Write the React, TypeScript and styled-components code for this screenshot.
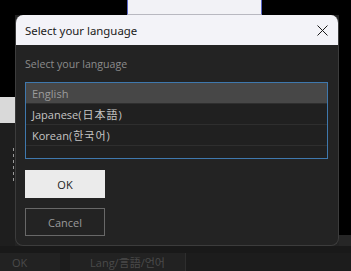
import styled, { createGlobalStyle } from 'styled-components';

const GlobalStyle = createGlobalStyle`
    html, body {
        margin: 0;
        padding: 0;
        background: #000;
    }
    body {
        font-family: "Open Sans", "Noto Sans", "Noto Sans CJK JP", sans-serif;
    }
`;

const StyledScreen = styled.div`
    position: relative;
    width: 351px;
    height: 271px;
    overflow: hidden;

    display: flex;
    flex-direction: column;

    background-color: #000;
`;

const TopStrip = styled.div`
    height: 15px;
    display: flex;

    .window {
        margin-left: 127px;
        width: 133px;
        height: 14px;
        background-color: #f2f2f6;
        border-left: 1px solid #5a66c8;
        border-right: 1px solid #5a66c8;
        border-bottom: 1px solid #b8b8c0;
    }
`;

const Middle = styled.div`
    flex: 1;
    display: flex;

    .left {
        width: 15px;
        display: flex;
        flex-direction: column;
        background-color: #1e1e1e;

        &-top {
            height: 82px;
            background-color: #000;
        }

        &-panel {
            height: 26px;
            background-color: #d9d9d9;
        }

        &-dots {
            margin: 25px 0 0 13px;
            width: 1px;
            height: 34px;
            background-image: linear-gradient(#9a9a9a 50%, transparent 50%);
            background-size: 1px 6px;
        }
    }

    .center {
        flex: 1;
        background-color: #232323;
    }

    .right {
        width: 12px;
        display: flex;
        flex-direction: column;
        background-color: #000;

        &-bottom {
            margin-top: auto;
            height: 11px;
            background-color: #262626;
        }
    }
`;

const BottomBar = styled.div`
    height: 25px;
    box-sizing: border-box;
    display: flex;
    align-items: stretch;

    background-color: #1c1c1c;
    border-top: 7px solid #191919;

    color: #4a4a4a;
    font-size: 11px;

    .ok {
        width: 60px;
        padding-left: 12px;
        box-sizing: border-box;
        display: flex;
        align-items: center;
        background-color: #222;
    }

    .lang {
        margin-left: 10px;
        width: 115px;
        display: flex;
        align-items: center;
        justify-content: center;
        background-color: #222;
        border-right: 1px solid #2e2e2e;
        font-family: "Open Sans", "Noto Sans CJK JP", sans-serif;
    }
`;

const Dialog = styled.div`
    position: absolute;
    top: 15px;
    left: 15px;
    width: 324px;
    height: 231px;
    box-sizing: border-box;

    display: flex;
    flex-direction: column;

    border-radius: 8px;
    border: 1px solid #3c3c3c;
    border-top: none;
    background-color: #232323;
    overflow: hidden;
`;

const TitleBar = styled.div`
    height: 30px;
    padding: 0 10px 0 9px;

    display: flex;
    justify-content: space-between;
    align-items: center;

    background-color: #f3f3f8;
    color: #1a1a1a;
    font-family: "Noto Sans", "Open Sans", sans-serif;
    font-size: 11.4px;

    svg {
        display: block;
    }
`;

const Body = styled.div`
    padding: 10px 10px 0 9px;
    display: flex;
    flex-direction: column;
`;

const Label = styled.div`
    height: 18px;
    color: #8c8c8c;
    font-size: 10.6px;
    line-height: 18px;
`;

const ListBox = styled.div`
    margin-top: 9px;
    height: 77px;
    box-sizing: border-box;

    display: flex;
    flex-direction: column;

    border: 1px solid #3f78ad;
    background-color: #202020;
`;

const ListItem = styled.div<{ $selected?: boolean }>`
    height: 21px;
    flex-shrink: 0;
    padding-left: 6px;
    box-sizing: border-box;

    display: flex;
    align-items: center;

    border-bottom: 1px solid #2e2e2e;
    background-color: ${({ $selected }) => ($selected ? '#474747' : 'transparent')};
    color: ${({ $selected }) => ($selected ? '#9c9c9c' : '#c4c4c4')};
    font-size: 11px;
    font-family: "Open Sans", "Noto Sans CJK JP", sans-serif;

    .cjk {
        letter-spacing: 1px;
        padding-left: 1px;
    }
`;

const Buttons = styled.div`
    margin-top: 11px;
    display: flex;
    flex-direction: column;
    gap: 10px;
`;

const Button = styled.button<{ $primary?: boolean }>`
    width: 80px;
    height: 28px;
    padding: 0;
    box-sizing: border-box;

    border: 1px solid ${({ $primary }) => ($primary ? '#ebebeb' : '#686868')};
    background-color: ${({ $primary }) => ($primary ? '#ebebeb' : 'transparent')};
    color: ${({ $primary }) => ($primary ? '#222' : '#9a9a9a')};
    font-family: "Open Sans", sans-serif;
    font-size: 11px;
`;

function App() {
    return (
        <>
            <GlobalStyle />
            <StyledScreen>
                <TopStrip>
                    <div className="window" />
                </TopStrip>

                <Middle>
                    <div className="left">
                        <div className="left-top" />
                        <div className="left-panel" />
                        <div className="left-dots" />
                    </div>
                    <div className="center" />
                    <div className="right">
                        <div className="right-bottom" />
                    </div>
                </Middle>

                <BottomBar>
                    <div className="ok">OK</div>
                    <div className="lang">Lang/言語/언어</div>
                </BottomBar>

                <Dialog>
                    <TitleBar>
                        Select your language
                        <svg width="11" height="11" viewBox="0 0 11 11">
                            <path d="M0.5 0.5 L10.5 10.5 M10.5 0.5 L0.5 10.5" stroke="#1a1a1a" strokeWidth="1" />
                        </svg>
                    </TitleBar>

                    <Body>
                        <Label>Select your language</Label>

                        <ListBox>
                            <ListItem $selected>English</ListItem>
                            <ListItem>Japanese(<span className="cjk">日本語</span>)</ListItem>
                            <ListItem>Korean(<span className="cjk">한국어</span>)</ListItem>
                        </ListBox>

                        <Buttons>
                            <Button $primary>OK</Button>
                            <Button>Cancel</Button>
                        </Buttons>
                    </Body>
                </Dialog>
            </StyledScreen>
        </>
    );
}

export default App;
